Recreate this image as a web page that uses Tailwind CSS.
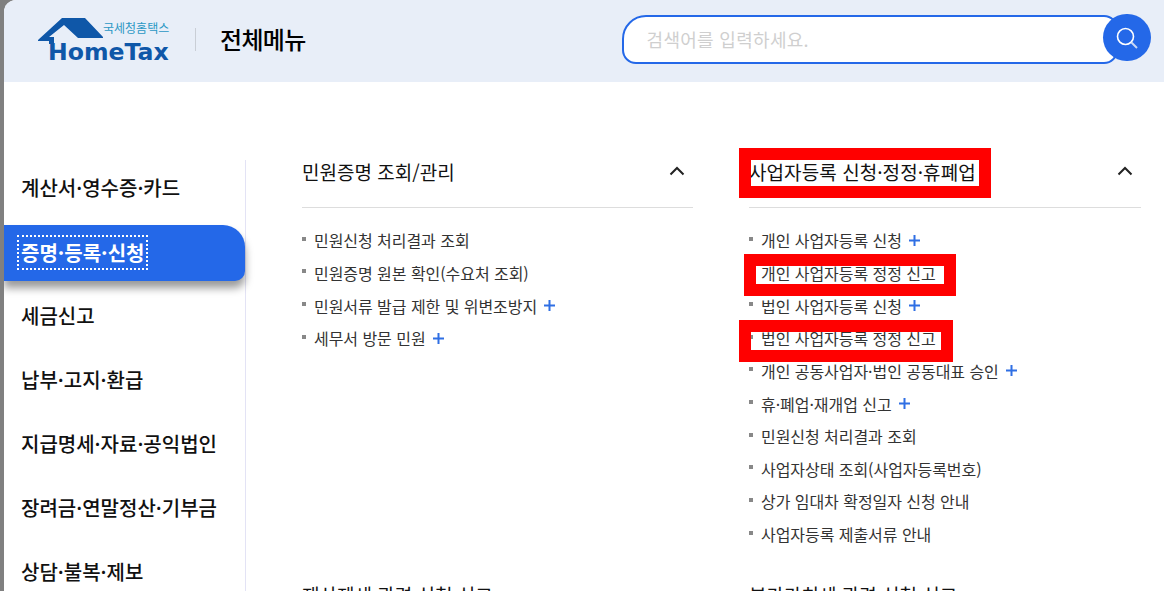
<!DOCTYPE html>
<html lang="ko">
<head>
  <meta charset="UTF-8">
  <title>전체메뉴</title>
  <script src="https://cdn.jsdelivr.net/npm/@tailwindcss/browser@4"></script>
</head>
<body class="relative h-[591px] w-[1164px] overflow-hidden bg-[#808080] pl-[4px] font-['Noto_Sans_CJK_KR','Noto_Sans',sans-serif] text-[#111]">
  <div class="h-full overflow-hidden rounded-tl-[12px] bg-white">
    <!-- 상단 헤더 -->
    <header class="flex h-[82px] items-center bg-[#e8eef8] pl-[34px]">
      <svg width="132" height="48" viewBox="0 0 132 48" class="shrink-0">
        <path d="M0 23 L24 1 H47 L65 20 V21 H40 L26 8 L11 20 H16 V27 H11 V24 H0 Z" fill="#0f57a8"/>
        <text x="10" y="43" font-family="DejaVu Sans" font-weight="700" font-size="23.6" fill="#0f57a8">HomeTax</text>
        <text x="65" y="16" font-family="Noto Sans CJK KR" font-size="12" fill="#2a97c4">국세청홈택스</text>
      </svg>
      <div class="mb-[4px] ml-[25px] h-[23px] w-px bg-[#c9ced6]"></div>
      <h1 class="mb-[5px] ml-[24px] text-[24px] leading-none font-medium tracking-[-0.7px] text-black">전체메뉴</h1>
      <div class="mb-[3px] ml-[316px] flex h-[49px] w-[496px] items-center rounded-tl-[24px] rounded-tr-[14px] rounded-br-[14px] rounded-bl-[14px] border-2 border-[#2468e8] bg-white pl-[23px] text-[18px] tracking-[0.3px] text-[#cfcfcf]">검색어를 입력하세요.</div>
      <div class="mb-[7px] ml-[-15px] flex h-[47px] w-[48px] shrink-0 items-center justify-center rounded-full bg-[#2468e8]">
        <svg width="24" height="24" viewBox="0 0 24 24" fill="none">
          <circle cx="10.5" cy="10.5" r="8" stroke="#fff" stroke-width="1.6"/>
          <path d="M16.5 16.5 L22 22" stroke="#c9d8f5" stroke-width="2"/>
        </svg>
      </div>
    </header>

    <div class="flex pt-[78px]">
      <!-- 왼쪽 메뉴 -->
      <nav class="h-[500px] w-[242px] shrink-0 border-r border-[#e3e3f5] pt-[1px] text-[20px] font-medium">
        <div class="flex h-[56px] items-center pb-[2px] pl-[17px]">계산서·영수증·카드</div>
        <div class="mt-[8px] flex h-[56px] w-[241px] items-center rounded-tr-[22px] rounded-br-[10px] bg-[#2468e8] pb-[2px] pl-[13px] font-bold text-white shadow-[0_7px_9px_rgba(0,0,0,0.4)]">
          <span class="border-2 border-dotted border-white px-[2px] leading-[31px]">증명·등록·신청</span>
        </div>
        <div class="mt-[8px] flex h-[56px] items-center pb-[2px] pl-[17px]">세금신고</div>
        <div class="mt-[8px] flex h-[56px] items-center pb-[2px] pl-[17px]">납부·고지·환급</div>
        <div class="mt-[8px] flex h-[56px] items-center pb-[2px] pl-[17px]">지급명세·자료·공익법인</div>
        <div class="mt-[8px] flex h-[56px] items-center pb-[2px] pl-[17px]">장려금·연말정산·기부금</div>
        <div class="mt-[8px] flex h-[56px] items-center pb-[2px] pl-[17px]">상담·불복·제보</div>
      </nav>

      <!-- 메뉴 목록 -->
      <main class="grid w-[839px] shrink-0 grid-cols-[391px_392px] content-start gap-x-[56px] pl-[56px] text-[16px] tracking-[-0.05px] text-[#333]">
        <section>
          <div class="flex h-[48px] items-start justify-between border-b border-[#ddd] pr-[8px] text-[19px] leading-[24px] tracking-normal text-[#111]">
            <span>민원증명 조회/관리</span>
            <svg class="mt-[6px]" width="16" height="10" viewBox="0 0 16 10" fill="none"><path d="M1.5 8.5 L8 2 L14.5 8.5" stroke="#222" stroke-width="2"/></svg>
          </div>
          <ul class="mt-[16px]">
            <li class="flex h-[32.65px] items-center"><i class="mr-[8px] mb-[3px] h-[4px] w-[4px] bg-[#888]"></i>민원신청 처리결과 조회</li>
            <li class="flex h-[32.65px] items-center"><i class="mr-[8px] mb-[3px] h-[4px] w-[4px] bg-[#888]"></i>민원증명 원본 확인(수요처 조회)</li>
            <li class="flex h-[32.65px] items-center"><i class="mr-[8px] mb-[3px] h-[4px] w-[4px] bg-[#888]"></i>민원서류 발급 제한 및 위변조방지<svg class="ml-[7px]" width="11" height="11" viewBox="0 0 11 11"><path d="M0 5.5 H11 M5.5 0 V11" stroke="#2f6fe4" stroke-width="2"/></svg></li>
            <li class="flex h-[32.65px] items-center"><i class="mr-[8px] mb-[3px] h-[4px] w-[4px] bg-[#888]"></i>세무서 방문 민원<svg class="ml-[7px]" width="11" height="11" viewBox="0 0 11 11"><path d="M0 5.5 H11 M5.5 0 V11" stroke="#2f6fe4" stroke-width="2"/></svg></li>
          </ul>
        </section>
        <section>
          <div class="flex h-[48px] items-start justify-between border-b border-[#ddd] pr-[8px] text-[19px] leading-[24px] tracking-[0.07px] text-[#111]">
            <span>사업자등록 신청·정정·휴폐업</span>
            <svg class="mt-[6px]" width="16" height="10" viewBox="0 0 16 10" fill="none"><path d="M1.5 8.5 L8 2 L14.5 8.5" stroke="#222" stroke-width="2"/></svg>
          </div>
          <ul class="mt-[16px]">
            <li class="flex h-[32.65px] items-center"><i class="mr-[8px] mb-[3px] h-[4px] w-[4px] bg-[#888]"></i>개인 사업자등록 신청<svg class="ml-[7px]" width="11" height="11" viewBox="0 0 11 11"><path d="M0 5.5 H11 M5.5 0 V11" stroke="#2f6fe4" stroke-width="2"/></svg></li>
            <li class="flex h-[32.65px] items-center"><i class="mr-[8px] mb-[3px] h-[4px] w-[4px] bg-[#888]"></i>개인 사업자등록 정정 신고</li>
            <li class="flex h-[32.65px] items-center"><i class="mr-[8px] mb-[3px] h-[4px] w-[4px] bg-[#888]"></i>법인 사업자등록 신청<svg class="ml-[7px]" width="11" height="11" viewBox="0 0 11 11"><path d="M0 5.5 H11 M5.5 0 V11" stroke="#2f6fe4" stroke-width="2"/></svg></li>
            <li class="flex h-[32.65px] items-center"><i class="mr-[8px] mb-[3px] h-[4px] w-[4px] bg-[#888]"></i>법인 사업자등록 정정 신고</li>
            <li class="flex h-[32.65px] items-center"><i class="mr-[8px] mb-[3px] h-[4px] w-[4px] bg-[#888]"></i>개인 공동사업자·법인 공동대표 승인<svg class="ml-[7px]" width="11" height="11" viewBox="0 0 11 11"><path d="M0 5.5 H11 M5.5 0 V11" stroke="#2f6fe4" stroke-width="2"/></svg></li>
            <li class="flex h-[32.65px] items-center"><i class="mr-[8px] mb-[3px] h-[4px] w-[4px] bg-[#888]"></i>휴·폐업·재개업 신고<svg class="ml-[7px]" width="11" height="11" viewBox="0 0 11 11"><path d="M0 5.5 H11 M5.5 0 V11" stroke="#2f6fe4" stroke-width="2"/></svg></li>
            <li class="flex h-[32.65px] items-center"><i class="mr-[8px] mb-[3px] h-[4px] w-[4px] bg-[#888]"></i>민원신청 처리결과 조회</li>
            <li class="flex h-[32.65px] items-center"><i class="mr-[8px] mb-[3px] h-[4px] w-[4px] bg-[#888]"></i>사업자상태 조회(사업자등록번호)</li>
            <li class="flex h-[32.65px] items-center"><i class="mr-[8px] mb-[3px] h-[4px] w-[4px] bg-[#888]"></i>상가 임대차 확정일자 신청 안내</li>
            <li class="flex h-[32.65px] items-center"><i class="mr-[8px] mb-[3px] h-[4px] w-[4px] bg-[#888]"></i>사업자등록 제출서류 안내</li>
          </ul>
        </section>
        <div class="col-span-2 mt-[33px] grid grid-cols-[391px_392px] gap-x-[56px] text-[19px] leading-[24px] tracking-normal text-[#111]">
          <span>재산제세 관련 신청·신고</span>
          <span>부가가치세 관련 신청·신고</span>
        </div>
      </main>
    </div>
  </div>

  <!-- 빨간 표시 상자 -->
  <div class="absolute top-[148px] left-[739px] h-[50px] w-[252px] border-[12px] border-[#ff0000]"></div>
  <div class="absolute top-[254px] left-[744px] h-[42px] w-[212px] border-[12px] border-[#ff0000]"></div>
  <div class="absolute top-[320px] left-[739px] h-[42px] w-[214px] border-[12px] border-[#ff0000]"></div>
</body>
</html>
